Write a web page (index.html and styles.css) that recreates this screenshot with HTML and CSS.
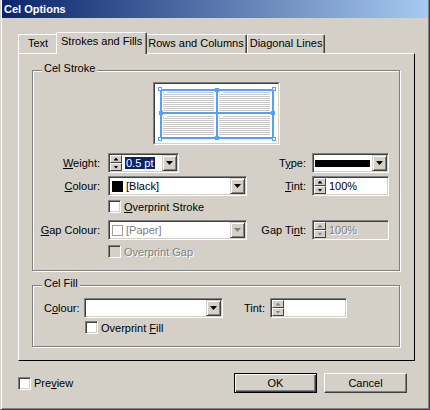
FILE: index.html
```html
<!DOCTYPE html>
<html lang="en">

<head>
    <meta charset="UTF-8">
    <title>Cel Options</title>
    <link rel="stylesheet" href="styles.css">
</head>

<body>
    <div class="window">
        <div class="titlebar">Cel Options</div>

        <div class="tabs">
            <div class="tab">Text</div>
            <div class="tab active">Strokes and Fills</div>
            <div class="tab">Rows and Columns</div>
            <div class="tab">Diagonal Lines</div>
        </div>

        <div class="panel">
            <!-- stroke settings -->
            <div class="group stroke">
                <span class="group-title">Cel Stroke</span>
                <div class="preview">
                    <svg class="cells" width="123" height="59" viewBox="0 0 123 59">
                        <defs>
                            <pattern id="text" width="4" height="2" patternUnits="userSpaceOnUse">
                                <rect width="4" height="1" fill="#c8c8c8" />
                            </pattern>
                        </defs>
                        <rect x="8" y="8" width="51" height="19" fill="url(#text)" />
                        <rect x="64" y="8" width="51" height="19" fill="url(#text)" />
                        <rect x="8" y="32" width="51" height="19" fill="url(#text)" />
                        <rect x="64" y="32" width="51" height="19" fill="url(#text)" />
                        <path d="M9 8.5h3M65 8.5h3M9 32.5h3M65 32.5h3" stroke="#fff" />
                        <g fill="none" stroke="#55a0ff" stroke-width="2">
                            <rect x="6" y="6" width="112" height="48" />
                            <path d="M62 6v48M6 29h112" />
                        </g>
                        <g fill="#fff" stroke="#55a0ff">
                            <rect x="3.5" y="3.5" width="3" height="3" />
                            <rect x="117.5" y="3.5" width="3" height="3" />
                            <rect x="3.5" y="53.5" width="3" height="3" />
                            <rect x="117.5" y="53.5" width="3" height="3" />
                        </g>
                        <g fill="#55a0ff">
                            <rect x="60" y="4" width="4" height="4" />
                            <rect x="4" y="27" width="4" height="4" />
                            <rect x="116" y="27" width="4" height="4" />
                            <rect x="60" y="52" width="4" height="4" />
                        </g>
                    </svg>
                </div>

                <div class="rows">
                    <div class="row">
                        <span class="lbl"><u>W</u>eight:</span>
                        <div class="field weight">
                            <span class="spinner"><i class="up"></i><i class="down"></i></span>
                            <span class="value"><span class="sel">0.5 pt</span></span>
                            <span class="drop"></span>
                        </div>
                        <span class="lbl">T<u>y</u>pe:</span>
                        <div class="field">
                            <span class="stroke-line"></span>
                            <span class="drop"></span>
                        </div>
                    </div>
                    <div class="row">
                        <span class="lbl"><u>C</u>olour:</span>
                        <div class="field">
                            <span class="swatch"></span>
                            <span class="value">[Black]</span>
                            <span class="drop"></span>
                        </div>
                        <span class="lbl"><u>T</u>int:</span>
                        <div class="field">
                            <span class="spinner"><i class="up"></i><i class="down"></i></span>
                            <span class="value">100%</span>
                        </div>
                    </div>
                    <div class="row check">
                        <span></span>
                        <label class="checkbox"><span class="box"></span><span><u>O</u>verprint Stroke</span></label>
                    </div>
                    <div class="row">
                        <span class="lbl"><u>G</u>ap Colour:</span>
                        <div class="field">
                            <span class="swatch empty"></span>
                            <span class="value muted">[Paper]</span>
                            <span class="drop off"></span>
                        </div>
                        <span class="lbl">Gap Ti<u>n</u>t:</span>
                        <div class="field off">
                            <span class="spinner off"><i class="up"></i><i class="down"></i></span>
                            <span class="value muted">100%</span>
                        </div>
                    </div>
                    <div class="row check last">
                        <span></span>
                        <label class="checkbox muted"><span class="box off"></span><span>Overprint Gap</span></label>
                    </div>
                </div>
            </div>

            <!-- fill settings -->
            <div class="group fill">
                <span class="group-title">Cel Fill</span>
                <div class="fill-row">
                    <span class="lbl">C<u>o</u>lour:</span>
                    <div class="field">
                        <span class="drop"></span>
                    </div>
                    <span class="lbl">Tint:</span>
                    <div class="field">
                        <span class="spinner off"><i class="up"></i><i class="down"></i></span>
                        <span class="value"></span>
                    </div>
                </div>
                <div class="fill-check">
                    <label class="checkbox"><span class="box"></span><span>Overprint <u>F</u>ill</span></label>
                </div>
            </div>
        </div>

        <div class="footer">
            <label class="checkbox"><span class="box"></span><span>Pre<u>v</u>iew</span></label>
            <div class="buttons">
                <button type="button" class="btn default">OK</button>
                <button type="button" class="btn">Cancel</button>
            </div>
        </div>
    </div>
</body>

</html>
```

FILE: styles.css
```css
* {
    margin: 0;
    padding: 0;
    box-sizing: border-box;
}

body {
    width: 430px;
    height: 410px;
    overflow: hidden;
    background-color: #d4d0c8;
    font-family: "Liberation Sans", Arial, sans-serif;
    font-size: 11px;
    color: #000;
}

u {
    text-underline-offset: 1px;
}

.window {
    height: 410px;
    padding: 0 1px 1px 1px;
    border: 1px solid;
    border-top: 0;
    border-color: #d4d0c8 #404040 #404040 #d4d0c8;
    box-shadow: inset 1px 0 #fff, inset -1px -1px #808080;
}

.titlebar {
    height: 18px;
    line-height: 18px;
    padding-left: 2px;
    background: linear-gradient(to right, #0a246a, #a6caf0);
    color: #fff;
    font-weight: bold;
}

/* Tabs */
.tabs {
    display: flex;
    align-items: flex-end;
    height: 21px;
    margin: 14px 0 0 16px;
}

.tab {
    height: 19px;
    min-width: 40px;
    padding: 0 2px;
    line-height: 17px;
    text-align: center;
    white-space: nowrap;
    border: 1px solid;
    border-bottom: 0;
    border-color: #fff #404040 transparent #fff;
    border-radius: 2px 2px 0 0;
    box-shadow: inset -1px 0 #808080;
}

.tab.active {
    position: relative;
    z-index: 1;
    height: 22px;
    margin: 0 -2px -1px;
    padding: 0 4px;
    background-color: #d4d0c8;
}

.panel {
    width: 397px;
    height: 308px;
    margin-left: 16px;
    padding: 16px 14px 0 13px;
    border: 1px solid;
    border-color: #fff #000 #000 #fff;
}

/* Group boxes */
.group {
    position: relative;
    border: 1px solid #808080;
    box-shadow: 1px 1px 0 #fff, inset 1px 1px 0 #fff;
}

.group.stroke {
    height: 201px;
}

.group.fill {
    height: 62px;
    margin-top: 14px;
}

.group-title {
    position: absolute;
    top: -9px;
    left: 9px;
    padding: 0 2px;
    line-height: 13px;
    background-color: #d4d0c8;
}

.preview {
    width: 127px;
    height: 63px;
    margin: 11px auto 0;
    border: 1px solid;
    border-color: #808080 #fff #fff #808080;
}

.cells {
    display: block;
    background-color: #fff;
    border: 1px solid;
    border-color: #404040 #d4d0c8 #d4d0c8 #404040;
    width: 125px;
    height: 61px;
}

.rows {
    margin-top: 8px;
}

.rows > * + * {
    margin-top: 3px;
}

.row {
    display: grid;
    grid-template-columns: 75px 139px 65px 77px;
    align-items: center;
    height: 20px;
}

.row.check {
    height: 13px;
    margin-top: 4px;
}

.row.check + .row {
    margin-top: 7px;
}

.row.check.last {
    margin-top: 5px;
}

.lbl {
    text-align: right;
    padding-right: 8px;
    white-space: nowrap;
}

.row .lbl:nth-child(3) {
    padding-right: 6px;
}

/* Sunken inputs */
.field {
    display: flex;
    align-items: center;
    height: 20px;
    padding: 1px;
    background-color: #fff;
    border: 1px solid;
    border-color: #808080 #fff #fff #808080;
    box-shadow: inset 1px 1px #404040, inset -1px -1px #d4d0c8;
}

.field.off {
    background-color: #d4d0c8;
}

.field.weight {
    width: 71px;
}

.value {
    flex: 1;
    padding-left: 3px;
    line-height: 13px;
    white-space: nowrap;
}

.sel {
    background-color: #0a246a;
    color: #fff;
    padding: 0 1px;
}

.muted {
    color: #808080;
    text-shadow: 1px 1px 0 #fff;
}

.stroke-line {
    width: 55px;
    height: 7px;
    margin-left: 1px;
    background-color: #000;
}

.swatch {
    width: 11px;
    height: 11px;
    margin-left: 2px;
    background-color: #000;
}

.swatch.empty {
    background-color: #fff;
    border: 1px solid #a0a0a0;
}

/* Buttons inside inputs */
.drop {
    display: flex;
    align-items: center;
    justify-content: center;
    width: 15px;
    height: 16px;
    margin-left: auto;
    background-color: #d4d0c8;
    border: 1px solid;
    border-color: #d4d0c8 #404040 #404040 #d4d0c8;
    box-shadow: inset 1px 1px #fff, inset -1px -1px #808080;
}

.drop::after {
    content: "";
    width: 7px;
    height: 4px;
    background-color: #000;
    clip-path: polygon(0 0, 100% 0, 50% 100%);
}

.drop.off::after {
    background-color: #808080;
}

.spinner {
    display: flex;
    flex-direction: column;
    width: 12px;
    height: 16px;
}

.spinner i {
    flex: 1;
    display: flex;
    align-items: center;
    justify-content: center;
    background-color: #d4d0c8;
    border: 1px solid;
    border-color: #fff #404040 #404040 #fff;
}

.spinner i::after {
    content: "";
    width: 5px;
    height: 3px;
    background-color: #000;
}

.spinner .up::after {
    clip-path: polygon(50% 0, 100% 100%, 0 100%);
}

.spinner .down::after {
    clip-path: polygon(0 0, 100% 0, 50% 100%);
}

.spinner.off i::after {
    background-color: #808080;
}

/* Checkboxes */
.checkbox {
    display: flex;
    align-items: center;
    white-space: nowrap;
}

.box {
    width: 13px;
    height: 13px;
    margin-right: 3px;
    background-color: #fff;
    border: 1px solid;
    border-color: #808080 #fff #fff #808080;
    box-shadow: inset 1px 1px #404040, inset -1px -1px #d4d0c8;
}

.box.off {
    background-color: #d4d0c8;
}

/* Fill group */
.fill-row {
    display: grid;
    grid-template-columns: 51px 139px 47px 77px;
    align-items: center;
    height: 20px;
    margin-top: 12px;
}

.fill-row .lbl:first-child {
    text-align: left;
    padding: 0 0 0 11px;
}

.fill-row .lbl {
    padding-right: 5px;
}

.fill-check {
    margin: 3px 0 0 52px;
}

/* Footer */
.footer {
    display: flex;
    align-items: center;
    height: 20px;
    margin-top: 12px;
    padding: 0 21px 0 16px;
}

.buttons {
    display: flex;
    gap: 7px;
    margin-left: auto;
}

.btn {
    width: 83px;
    height: 20px;
    font: inherit;
    color: #000;
    background-color: #d4d0c8;
    border: 1px solid;
    border-color: #fff #404040 #404040 #fff;
    box-shadow: inset -1px -1px #808080;
}

.btn.default {
    border-color: #000;
    box-shadow: inset 1px 1px #fff, inset -1px -1px #404040, inset -2px -2px #808080;
}
```
